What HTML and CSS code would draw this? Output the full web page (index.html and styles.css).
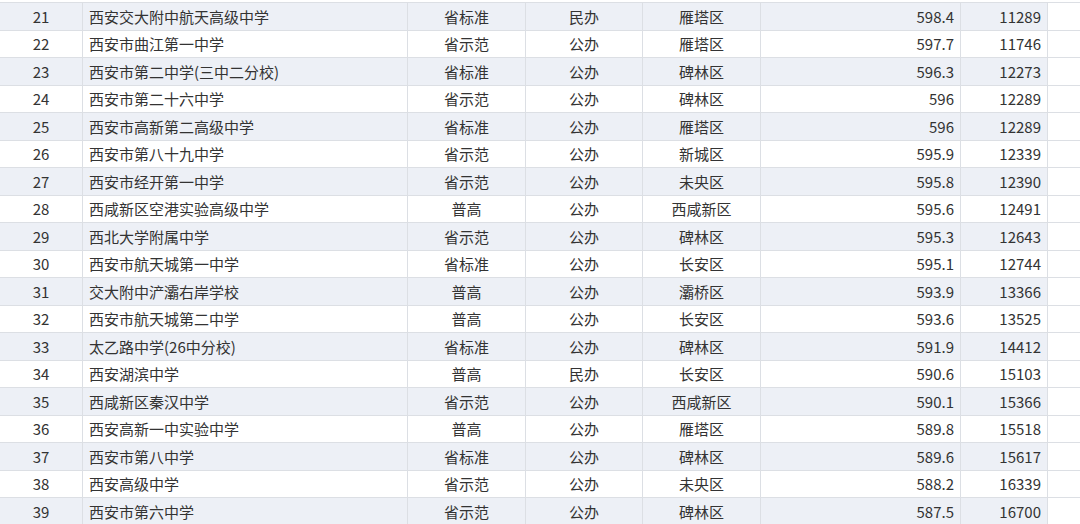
FILE: index.html
```html
<!DOCTYPE html>
<html lang="zh-CN">
<head>
<meta charset="utf-8">
<title>西安高中排名</title>
<link rel="stylesheet" href="styles.css">
</head>
<body>
<div class="table">
  <div class="row odd"><div class="c idx">21</div><div class="c name">西安交大附中航天高级中学</div><div class="c mid">省标准</div><div class="c mid">民办</div><div class="c mid">雁塔区</div><div class="c num">598.4</div><div class="c num">11289</div><div class="c blank"></div></div>
  <div class="row"><div class="c idx">22</div><div class="c name">西安市曲江第一中学</div><div class="c mid">省示范</div><div class="c mid">公办</div><div class="c mid">雁塔区</div><div class="c num">597.7</div><div class="c num">11746</div><div class="c blank"></div></div>
  <div class="row odd"><div class="c idx">23</div><div class="c name">西安市第二中学(三中二分校)</div><div class="c mid">省标准</div><div class="c mid">公办</div><div class="c mid">碑林区</div><div class="c num">596.3</div><div class="c num">12273</div><div class="c blank"></div></div>
  <div class="row"><div class="c idx">24</div><div class="c name">西安市第二十六中学</div><div class="c mid">省示范</div><div class="c mid">公办</div><div class="c mid">碑林区</div><div class="c num">596</div><div class="c num">12289</div><div class="c blank"></div></div>
  <div class="row odd"><div class="c idx">25</div><div class="c name">西安市高新第二高级中学</div><div class="c mid">省标准</div><div class="c mid">公办</div><div class="c mid">雁塔区</div><div class="c num">596</div><div class="c num">12289</div><div class="c blank"></div></div>
  <div class="row"><div class="c idx">26</div><div class="c name">西安市第八十九中学</div><div class="c mid">省示范</div><div class="c mid">公办</div><div class="c mid">新城区</div><div class="c num">595.9</div><div class="c num">12339</div><div class="c blank"></div></div>
  <div class="row odd"><div class="c idx">27</div><div class="c name">西安市经开第一中学</div><div class="c mid">省示范</div><div class="c mid">公办</div><div class="c mid">未央区</div><div class="c num">595.8</div><div class="c num">12390</div><div class="c blank"></div></div>
  <div class="row"><div class="c idx">28</div><div class="c name">西咸新区空港实验高级中学</div><div class="c mid">普高</div><div class="c mid">公办</div><div class="c mid">西咸新区</div><div class="c num">595.6</div><div class="c num">12491</div><div class="c blank"></div></div>
  <div class="row odd"><div class="c idx">29</div><div class="c name">西北大学附属中学</div><div class="c mid">省示范</div><div class="c mid">公办</div><div class="c mid">碑林区</div><div class="c num">595.3</div><div class="c num">12643</div><div class="c blank"></div></div>
  <div class="row"><div class="c idx">30</div><div class="c name">西安市航天城第一中学</div><div class="c mid">省标准</div><div class="c mid">公办</div><div class="c mid">长安区</div><div class="c num">595.1</div><div class="c num">12744</div><div class="c blank"></div></div>
  <div class="row odd"><div class="c idx">31</div><div class="c name">交大附中浐灞右岸学校</div><div class="c mid">普高</div><div class="c mid">公办</div><div class="c mid">灞桥区</div><div class="c num">593.9</div><div class="c num">13366</div><div class="c blank"></div></div>
  <div class="row"><div class="c idx">32</div><div class="c name">西安市航天城第二中学</div><div class="c mid">普高</div><div class="c mid">公办</div><div class="c mid">长安区</div><div class="c num">593.6</div><div class="c num">13525</div><div class="c blank"></div></div>
  <div class="row odd"><div class="c idx">33</div><div class="c name">太乙路中学(26中分校)</div><div class="c mid">省标准</div><div class="c mid">公办</div><div class="c mid">碑林区</div><div class="c num">591.9</div><div class="c num">14412</div><div class="c blank"></div></div>
  <div class="row"><div class="c idx">34</div><div class="c name">西安湖滨中学</div><div class="c mid">普高</div><div class="c mid">民办</div><div class="c mid">长安区</div><div class="c num">590.6</div><div class="c num">15103</div><div class="c blank"></div></div>
  <div class="row odd"><div class="c idx">35</div><div class="c name">西咸新区秦汉中学</div><div class="c mid">省示范</div><div class="c mid">公办</div><div class="c mid">西咸新区</div><div class="c num">590.1</div><div class="c num">15366</div><div class="c blank"></div></div>
  <div class="row"><div class="c idx">36</div><div class="c name">西安高新一中实验中学</div><div class="c mid">普高</div><div class="c mid">公办</div><div class="c mid">雁塔区</div><div class="c num">589.8</div><div class="c num">15518</div><div class="c blank"></div></div>
  <div class="row odd"><div class="c idx">37</div><div class="c name">西安市第八中学</div><div class="c mid">省标准</div><div class="c mid">公办</div><div class="c mid">碑林区</div><div class="c num">589.6</div><div class="c num">15617</div><div class="c blank"></div></div>
  <div class="row"><div class="c idx">38</div><div class="c name">西安高级中学</div><div class="c mid">省示范</div><div class="c mid">公办</div><div class="c mid">未央区</div><div class="c num">588.2</div><div class="c num">16339</div><div class="c blank"></div></div>
  <div class="row odd"><div class="c idx">39</div><div class="c name">西安市第六中学</div><div class="c mid">省示范</div><div class="c mid">公办</div><div class="c mid">碑林区</div><div class="c num">587.5</div><div class="c num">16700</div><div class="c blank"></div></div>
</div>
</body>
</html>
```

FILE: styles.css
```css
html, body {
  margin: 0;
  padding: 0;
  background: #ffffff;
}
body {
  padding-top: 2px;
  font-family: "Noto Sans CJK SC", "Noto Sans", sans-serif;
  font-size: 15px;
  color: #333333;
  overflow: hidden;
  height: 524px;
  box-sizing: border-box;
}
.table {
  width: 1080px;
  border-top: 1px solid #dcdfe4;
}
.row {
  display: grid;
  grid-template-columns: 83px 325px 118px 117px 118px 200px 87px 32px;
  height: 27.5px;
  box-sizing: border-box;
  border-bottom: 1px solid #dcdfe4;
  background: #ffffff;
}
.row.odd {
  background: #edf0f6;
}
.c {
  box-sizing: border-box;
  border-right: 1px solid #dcdfe4;
  display: flex;
  align-items: center;
  white-space: nowrap;
  line-height: 1;
  padding: 0 6px;
}
.idx, .mid {
  justify-content: center;
}
.name {
  justify-content: flex-start;
}
.num {
  justify-content: flex-end;
}
.blank {
  border-right: none;
  background: #ffffff;
}
```
